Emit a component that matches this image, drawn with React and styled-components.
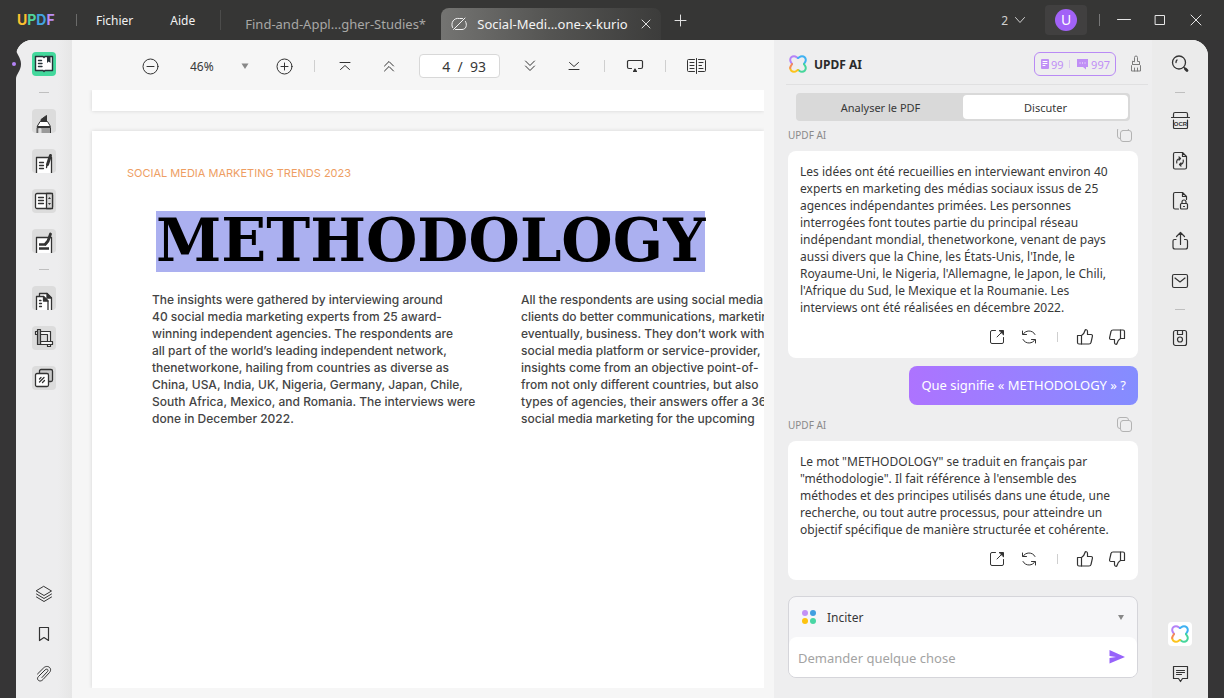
import React, { useState } from "react";
import styled, { createGlobalStyle, css } from "styled-components";

const GlobalStyle = createGlobalStyle`
    * { box-sizing: border-box; }
    body {
        margin: 0;
        background: #363536;
        font-family: "Noto Sans", "Open Sans", sans-serif;
        font-size: 12px;
        color: #383838;
    }
    button, input, select { font: inherit; color: inherit; }
`;

/* ---------- shared ---------- */

const Svg = styled.svg`
    display: block;
    flex: none;
    fill: none;
    stroke: currentColor;
    stroke-linecap: round;
    stroke-linejoin: round;
`;

const IconButton = styled.button`
    width: 24px;
    height: 24px;
    padding: 0;
    border: 0;
    border-radius: 4px;
    flex: none;
    overflow: hidden;
    cursor: pointer;
    color: ${props => props.$color || "#333"};
    background: ${props => props.$bg || "transparent"};
`;

const Divider = styled.span`
    width: 1px;
    height: ${props => props.$height || 12}px;
    flex: none;
    background: ${props => props.$color || "#cfcfcf"};
`;

const Icon = ({ children, width = 1 }) => (
    <Svg width="24" height="24" viewBox="0 0 24 24" strokeWidth={width} aria-hidden="true">
        {children}
    </Svg>
);

/* ---------- title bar ---------- */

const Page = styled.div`
    height: 100vh;
    display: flex;
    flex-direction: column;
    overflow: hidden;
`;

const TitleBar = styled.header`
    height: 40px;
    flex: none;
    display: flex;
    align-items: center;
    padding: 0 16px;
    background: #363635;
    color: #f2f2f2;
`;

const Logo = styled.div`
    width: 60px;
    padding-left: 1px;
    font-family: Inter, sans-serif;
    font-weight: 700;
    font-size: 14px;
    line-height: 20px;
`;

const Letter = styled.span`
    color: ${props => props.$color};
`;

const Menu = styled.nav`
    display: flex;
    gap: 37px;
    margin: 0 25px 0 19px;
`;

const MenuButton = styled.button`
    border: 0;
    padding: 2px 0 0;
    background: none;
    line-height: 20px;
    cursor: pointer;
`;

const Tabs = styled.div`
    align-self: flex-end;
    display: flex;
    flex: none;
    margin-right: 7px;
    font-size: 13px;
`;

const Tab = styled.div`
    width: 220px;
    height: 32px;
    display: flex;
    align-items: center;
    color: #a8a8a6;
    padding-left: 24px;
    ${props => props.$active && css`
        color: #f4f4f4;
        padding-left: 6px;
        border-radius: 8px 8px 0 0;
        background: linear-gradient(90deg, #747472, #545452 50%, #3c3c3b);
    `}
`;

const TabLabel = styled.button`
    border: 0;
    padding: 0;
    margin: 0 6px;
    background: none;
    white-space: nowrap;
    cursor: pointer;
    ${props => props.$bare && css`margin: 0;`}
`;

const WindowTools = styled.div`
    margin-left: auto;
    display: flex;
    align-items: center;
    gap: 12px;
`;

const WindowCount = styled.button`
    display: flex;
    align-items: center;
    border: 0;
    padding: 0;
    margin-right: 1px;
    background: none;
    color: #d0d0d0;
`;

const Account = styled.button`
    width: 42px;
    height: 30px;
    padding: 0;
    border: 0;
    border-radius: 4px;
    display: grid;
    place-items: center;
    background: #414040;
`;

const Avatar = styled.span`
    width: 22px;
    height: 22px;
    border-radius: 50%;
    background: #a262f7;
    color: #fff;
    font-size: 14px;
    line-height: 22px;
`;

/* ---------- shell ---------- */

const Shell = styled.div`
    position: relative;
    flex: 1;
    min-height: 0;
    display: flex;
    margin: 0 16px;
    border-radius: 16px 16px 0 0;
    background: #f6f6f6;
`;

const Rail = styled.aside`
    width: 56px;
    flex: none;
    display: flex;
    flex-direction: column;
    align-items: center;
    gap: 16px;
    padding: 12px 0;
    background: ${props => props.$right ? "#ebebeb" : "linear-gradient(90deg, #ededee 75%, #e6e6e6)"};
    border-radius: ${props => props.$right ? "0 16px 0 0" : "16px 0 0 0"};
`;

const RailDash = styled.span`
    width: 10px;
    height: 1px;
    flex: none;
    background: #bfbfbf;
`;

const Spacer = styled.span`
    flex: 1;
`;

const Notch = styled.svg`
    position: absolute;
    left: -4px;
    top: 9px;
`;

/* ---------- viewer ---------- */

const Viewer = styled.main`
    flex: 1;
    min-width: 0;
    display: flex;
    flex-direction: column;
    padding: 0 10px 10px 16px;
    background: #f6f6f6;
`;

const Toolbar = styled.div`
    height: 50px;
    flex: none;
    display: flex;
    align-items: center;
    gap: 18px;
    padding: 2px 0 0 50px;
`;

const StepGroup = styled.div`
    display: flex;
    gap: 20px;
`;

const ZoomSelect = styled.div`
    width: 74px;
    display: flex;
    align-items: center;
    padding: 0 4px 0 10px;
    select {
        flex: 1;
        appearance: none;
        border: 0;
        padding: 0;
        background: none;
    }
`;

const PageInput = styled.input`
    width: 81px;
    height: 24px;
    border: 1px solid #d8d8d8;
    border-radius: 4px;
    background: #fff;
    text-align: right;
    padding: 0 13px;
    font-size: 14px;
    white-space: pre;
`;

const Pages = styled.div`
    flex: 1;
    min-height: 0;
    overflow: hidden;
    display: flex;
    flex-direction: column;
    gap: 20px;
    padding-left: 4px;
`;

const Sheet = styled.article`
    background: #fff;
    box-shadow: 0 0 4px rgba(0, 0, 0, 0.14);
    font-family: Inter, sans-serif;
    overflow: hidden;
    ${props => props.$tail
        ? css`height: 21px; flex: none;`
        : css`flex: 1; padding: 34px 0 0 35px;`}
`;

const Kicker = styled.p`
    margin: 0;
    font-size: 11px;
    line-height: 17px;
    color: #ee9e63;
    text-transform: uppercase;
`;

const Title = styled.h1`
    margin: 29px 0 19px 29px;
    font-family: "DejaVu Serif", serif;
    font-size: 59px;
    font-weight: 700;
    line-height: 61px;
    color: #000;
    mark {
        display: block;
        width: fit-content;
        height: 61px;
        line-height: 60px;
        color: inherit;
        background: #abb0f0;
    }
`;

const Columns = styled.div`
    display: grid;
    grid-template-columns: 369px 369px;
    padding-left: 25px;
`;

const Column = styled.p`
    margin: 0;
    font-size: 12px;
    font-weight: 500;
    line-height: 17px;
    color: #444;
    white-space: pre;
`;

/* ---------- assistant ---------- */

const Panel = styled.section`
    width: 378px;
    flex: none;
    display: flex;
    flex-direction: column;
    padding: 0 14px 20px;
    background: #eeeeef;
`;

const PanelHeader = styled.div`
    height: 45px;
    flex: none;
    display: flex;
    align-items: center;
    margin: 0 -10px 0 -2px;
    padding: 4px 0 0;
    border-bottom: 1px solid #e0e0e1;
`;

const PanelTitle = styled.h2`
    flex: 1;
    margin: 0 0 0 4px;
    font-size: 12px;
    font-weight: 700;
    color: #2b2b2b;
`;

const Credits = styled.div`
    height: 24px;
    width: 82px;
    display: flex;
    align-items: center;
    justify-content: space-between;
    padding: 0 5px;
    margin-right: 8px;
    border: 1px solid #b98af5;
    border-radius: 6px;
    color: #c08ff6;
`;

const Credit = styled.span`
    display: flex;
    align-items: center;
    gap: 1px;
    font-size: 11px;
`;

const Switcher = styled.div`
    height: 28px;
    flex: none;
    display: grid;
    grid-template-columns: 1fr 1fr;
    margin: 8px 8px;
    padding: 2px;
    border-radius: 4px;
    background: #d9d9d9;
`;

const SwitchButton = styled.button`
    border: 0;
    padding: 0;
    border-radius: 4px;
    font-size: 11px;
    background: ${props => props.$on ? "#fff" : "transparent"};
    cursor: pointer;
`;

const Chat = styled.div`
    flex: 1;
    min-height: 0;
    overflow: hidden;
    display: flex;
    flex-direction: column;
    justify-content: flex-end;
    padding-bottom: 16px;
`;

const Sender = styled.div`
    height: 36px;
    flex: none;
    display: flex;
    align-items: center;
    justify-content: space-between;
    padding: 3px 1px 0 0;
    font-size: 10px;
    color: #8a8a8a;
`;

const Card = styled.div`
    flex: none;
    padding: 12px 12px 0;
    border-radius: 8px;
    background: #fff;
    p {
        margin: 0;
        line-height: 17px;
        white-space: pre;
    }
`;

const Actions = styled.div`
    height: 42px;
    display: flex;
    align-items: center;
    justify-content: flex-end;
    gap: 8px;
    margin-right: -3px;
`;

const ActionDivider = styled(Divider)`
    margin: 0 7px 0 8px;
`;

const Question = styled.p`
    align-self: flex-end;
    flex: none;
    margin: 8px 0 0;
    padding: 0 12px;
    line-height: 39px;
    border-radius: 8px;
    color: #fff;
    font-size: 13px;
    background: linear-gradient(90deg, #ad73ff, #848dff);
`;

const Composer = styled.form`
    height: 82px;
    flex: none;
    display: flex;
    flex-direction: column;
    border: 1px solid #d5d5da;
    border-radius: 8px;
    background: #f6f6f8;
    overflow: hidden;
`;

const PromptRow = styled.div`
    height: 40px;
    display: flex;
    align-items: center;
    padding: 0 4px 0 8px;
    select {
        flex: 1;
        appearance: none;
        border: 0;
        padding: 0 6px;
        background: none;
    }
`;

const AskRow = styled.div`
    flex: 1;
    display: flex;
    align-items: center;
    padding: 0 8px 0 9px;
    border-radius: 8px 8px 0 0;
    background: #fff;
    input {
        flex: 1;
        min-width: 0;
        border: 0;
        padding: 2px 0 0;
        outline: 0;
        font-size: 13px;
        background: none;
    }
    input::placeholder { color: #a3a3a3; opacity: 1; }
`;

/* ---------- icons ---------- */

const AiLogo = () => (
    <Icon width={2}>
        <path stroke="#b583f7" d="M6 12C6 11 4.200 10.200 4.200 8A3.800 3.800 0 0 1 8 4.200C10.400 4.200 10.800 6 12 6" />
        <path stroke="#3fb1f2" d="M12 6C13.200 6 13.600 4.200 16 4.200A3.800 3.800 0 0 1 19.800 8C19.800 10.200 18 11 18 12" />
        <path stroke="#46d69b" d="M18 12C18 13 19.800 13.800 19.800 16A3.800 3.800 0 0 1 16 19.800C13.600 19.800 13.200 18 12 18" />
        <path stroke="#fcc31c" d="M12 18C10.800 18 10.400 19.800 8 19.800A3.800 3.800 0 0 1 4.200 16" />
        <path stroke="#f58b57" d="M4.200 16C4.200 13.800 6 13 6 12" />
    </Icon>
);

const CaretIcon = () => (
    <Svg width="10" height="10" viewBox="0 0 10 10">
        <path fill="#888" stroke="none" d="M1.500 2.500H8.500L5 8Z" />
    </Svg>
);

const CopyIcon = () => (
    <Icon>
        <path d="M7.500 15.500H7A2.500 2.500 0 0 1 4.500 13V7A2.500 2.500 0 0 1 7 4.500H13A2.500 2.500 0 0 1 15.500 7V7.500" />
        <rect x="7.500" y="7.500" width="11" height="11" rx="2.500" />
    </Icon>
);

const ThumbPath = () => (
    <>
        <path d="M4.500 10.500H8.500V19H6A1.500 1.500 0 0 1 4.500 17.500Z" />
        <path d="M8.500 10.500C10.500 9.500 11.500 7.500 12 5.500C12.300 4.300 14.500 4.300 14.500 6.500V9.500H18C19.200 9.500 19.600 10.300 19.400 11.300L18 17.500C17.800 18.500 17 19 16 19H8.500" />
    </>
);

const icons = {
    reader: (
        <Icon width={1.4}>
            <path fill="#fff" stroke="#263238" d="M3.500 4.500H11L12 5.500L13 4.500H20.500V18.500H13L12 19.500L11 18.500H3.500Z" />
            <path stroke="#263238" d="M6.500 8.500H9.500M6.500 11.500H10M6.500 14.500H10" />
            <path fill="#263238" stroke="none" d="M15 4H18.500V11L16.700 9.500L15 11Z" />
        </Icon>
    ),
    highlight: (
        <Icon>
            <path fill="#333" d="M9 12V10.500L14.500 6.500V12Z" />
            <path fill="#fff" d="M8.500 12.500H15.500L18.500 17.500H5.500Z" />
            <path fill="#9a9a9a" d="M5.500 18.500H18.500V25H5.500Z" />
            <path stroke="#ddd" strokeWidth="3" d="M8 20.500V25" />
        </Icon>
    ),
    edit: (
        <Icon width={1.3}>
            <path fill="#fff" d="M4.500 25V8.500H19.500V25" />
            <path d="M7.500 13.500H11.500M7.500 16.500H11.500M7.500 19.500H11.500" />
            <path strokeWidth="3" d="M18.500 6.500L15.500 15.500" />
            <path d="M15 16L14.500 18.500" />
        </Icon>
    ),
    form: (
        <Icon width={1.3}>
            <rect x="3.500" y="4.500" width="17" height="15" rx="1.500" fill="#fff" />
            <path fill="#d5d5d5" d="M14.500 4.500H20.500V19.500H14.500Z" />
            <path d="M6.500 8.500H11.500M6.500 11.500H11.500M6.500 14.500H11.500" />
            <path fill="#333" stroke="none" d="M16 10H19L17.500 8ZM16 14H19L17.500 16Z" />
        </Icon>
    ),
    redact: (
        <Icon width={1.3}>
            <path fill="#fff" d="M4.500 25V8.500H19.500V25" />
            <path strokeWidth="2.500" strokeLinecap="butt" d="M7 15.500H14M7 19.500H17" />
            <path strokeWidth="2.800" d="M18.500 5L16 12L13.500 15" />
        </Icon>
    ),
    organize: (
        <Icon width={1.3}>
            <path fill="#fff" d="M7.500 7.500H15L19.500 12V25H7.500Z" />
            <path fill="#fff" d="M4.500 25V10.500H11.500L16 15V25" />
            <path fill="#333" d="M15 7.500V12H19.500ZM11.500 10.500V15H16Z" />
            <path d="M7.500 14.500H9M7.500 17.500H9.500M7.500 20.500H9.500" />
        </Icon>
    ),
    crop: (
        <Icon width={1.2}>
            <path fill="#f4f4f4" d="M3.500 5.500H18.500V20.500H15.500V8.500H3.500Z" />
            <path fill="#f4f4f4" d="M8.500 15.500H20.500V18.500H8.500Z" />
            <path fill="#aaa" d="M5.500 3.500H8.500V18.500H5.500Z" />
        </Icon>
    ),
    watermark: (
        <Icon width={1.3}>
            <rect x="7.500" y="3.500" width="13" height="12" rx="1.500" fill="#c9c9c9" />
            <rect x="3.500" y="7.500" width="13" height="13" rx="1.500" fill="#fff" />
            <path d="M7.500 13L9 11.500M7.500 16L12 11.500M10.500 16.500L12.500 14.500" />
        </Icon>
    ),
    layers: (
        <Icon>
            <path d="M12 4.500L19.500 9L12 13.500L4.500 9Z" />
            <path d="M4.500 12L12 16.500L19.500 12M4.500 15L12 19.500L19.500 15" />
        </Icon>
    ),
    bookmark: <Icon width={1.2}><path d="M7.500 5.500H16.500V18.500L12 15.500L7.500 18.500Z" /></Icon>,
    attach: (
        <Icon>
            <path d="M5.500 12L11.500 6C15.500 2 21 6.500 17.500 10.500L11 17.500C8 21 3.500 17.500 6.500 14.500L13 8C15 6 17 8 15.500 9.500L10 15.500" />
        </Icon>
    ),
    search: (
        <Icon width={1.3}>
            <circle cx="11" cy="10.500" r="6.500" />
            <path d="M8 10.500A3 3 0 0 1 9 8M16 15.500L17 16.500" />
            <path strokeWidth="2.800" d="M17.500 17L19 18.500" />
        </Icon>
    ),
    ocr: (
        <Icon width={1.2}>
            <path d="M5.500 8.500V5A1.500 1.500 0 0 1 7 3.500H18A1.500 1.500 0 0 1 19.500 5V8.500M3.500 8.500H21.500M5.500 11V18.500A1 1 0 0 0 6.500 19.500H18.500A1 1 0 0 0 19.500 18.500V11" />
            <text x="12.500" y="17" textAnchor="middle" fill="currentColor" stroke="none" fontFamily="Liberation Sans" fontSize="6" fontWeight="700">OCR</text>
        </Icon>
    ),
    convert: (
        <Icon width={1.2}>
            <path d="M14.500 3.500H7A1.500 1.500 0 0 0 5.500 5V18.500A1.500 1.500 0 0 0 7 20H17A1.500 1.500 0 0 0 18.500 18.500V7.500ZM14.500 3.500V7.500H18.500" />
            <path d="M8.800 14A3.500 3.500 0 0 1 12 9.500M11 8L12.500 9.500L11 11M15.200 11A3.500 3.500 0 0 1 12 15.500M13 14L11.500 15.500L13 17" />
        </Icon>
    ),
    protect: (
        <Icon width={1.2}>
            <path d="M10.500 20H7A1.500 1.500 0 0 1 5.500 18.500V5A1.500 1.500 0 0 1 7 3.500H14.500L18.500 7.500V10.500M14.500 3.500V7.500H18.500" />
            <rect x="12.500" y="14.500" width="7" height="5.500" rx="1" />
            <path d="M14 14.500V13A2 2 0 0 1 18 13V14.500M15.500 17.500H16.500" />
        </Icon>
    ),
    share: (
        <Icon width={1.2}>
            <path d="M8 10.500H6.500A1.500 1.500 0 0 0 5 12V18A2 2 0 0 0 7 20H17.500A2 2 0 0 0 19.500 18V12A1.500 1.500 0 0 0 18 10.500H16.500M12.500 15.500V4M8.500 7.500L12.500 3.500L16.500 7.500" />
        </Icon>
    ),
    mail: (
        <Icon width={1.2}>
            <rect x="4.500" y="5.500" width="15" height="13" rx="1.500" />
            <path d="M7 9L12 13L17 9" />
        </Icon>
    ),
    save: (
        <Icon width={1.2}>
            <rect x="5.500" y="4.500" width="13" height="15" rx="2" />
            <path d="M9.500 4.500V8.500H14.500V4.500" />
            <circle cx="12" cy="13.500" r="2.500" />
        </Icon>
    ),
    comment: (
        <Icon width={1.2}>
            <path d="M5.500 4.500H19.500V16.500H14.500L12.500 19.500L10.500 16.500H5.500ZM8.500 8.500H16.500M8.500 10.500H16.500M8.500 12.500H13.500" />
        </Icon>
    ),
    minus: <Icon><circle cx="12.500" cy="12.500" r="7.500" /><path d="M9 12.500H16" /></Icon>,
    plus: <Icon><circle cx="12.500" cy="12.500" r="7.500" /><path d="M9 12.500H16M12.500 9V16" /></Icon>,
    first: <Icon><path d="M7 8.500H17M7.500 15.500L12 11.500L16.500 15.500" /></Icon>,
    prev: <Icon><path d="M7.500 12L12 7.500L16.500 12M7.500 17L12 12.500L16.500 17" /></Icon>,
    next: <Icon><path d="M7.500 7L12 11.500L16.500 7M7.500 12L12 16.500L16.500 12" /></Icon>,
    last: <Icon><path d="M7 15.500H17M7.500 8.500L12 12.500L16.500 8.500" /></Icon>,
    present: (
        <Icon width={1.2}>
            <path d="M8.500 14.500H6A1.500 1.500 0 0 1 4.500 13V7.500A1.500 1.500 0 0 1 6 6.500H18.500A1.500 1.500 0 0 1 19.500 7.500V13A1.500 1.500 0 0 1 18 14.500H15.500" />
            <path fill="currentColor" d="M10.500 17.500L12 15L13.500 17.500Z" />
        </Icon>
    ),
    compare: (
        <Icon>
            <path d="M12.500 4.500V19.500M10.500 5.500H4.500A1 1 0 0 0 3.500 6.500V16.500A1 1 0 0 0 4.500 17.500H10.500M14.500 5.500H20.500A1 1 0 0 1 21.500 6.500V16.500A1 1 0 0 1 20.500 17.500H14.500M6 8.500H10M6 11.500H10M6 14.500H10M15 8.500H19M15 11.500H17.500M15 14.500H19" />
        </Icon>
    ),
    open: (
        <Icon>
            <path d="M10.500 5.500H7A1.500 1.500 0 0 0 5.500 7V17A1.500 1.500 0 0 0 7 18.500H17A1.500 1.500 0 0 0 18.500 17V12.500M12 12L17.500 6.500" />
            <path fill="currentColor" d="M14.500 5.500H18.500V9.500Z" />
        </Icon>
    ),
    refresh: (
        <Icon>
            <path d="M5.500 6V9.500H9.500M6 9.500C8 5 15.500 4.500 18 9.500M18.500 18V14.500H14.500M18 14.500C16 19 8.500 19.500 6 14.500" />
        </Icon>
    ),
    like: <Icon width={1.2}><ThumbPath /></Icon>,
    dislike: <Icon width={1.2}><g transform="rotate(180 12 12)"><ThumbPath /></g></Icon>,
    clean: (
        <Icon>
            <path d="M10.500 9.500V5.500A1.500 1.500 0 0 1 13.500 5.500V9.500H15.500V12.500H8.500V9.500ZM8.500 12.500L7.500 13.500V19H16.500V13.500L15.500 12.500M10.500 16V19M13.500 16V19" />
        </Icon>
    ),
    close: <Icon><path d="M8 8L16 16M16 8L8 16" /></Icon>,
    add: <Icon><path d="M7 12.500H18M12.500 7V18" /></Icon>,
};

/* ---------- content ---------- */

const columnOne = `The insights were gathered by interviewing around
40 social media marketing experts from 25 award-
winning independent agencies. The respondents are
all part of the world’s leading independent network,
thenetworkone, hailing from countries as diverse as
China, USA, India, UK, Nigeria, Germany, Japan, Chile,
South Africa, Mexico, and Romania. The interviews were
done in December 2022.`;

const columnTwo = `All the respondents are using social media
clients do better communications, marketing
eventually, business. They don’t work with
social media platform or service-provider,
insights come from an objective point-of-
from not only different countries, but also
types of agencies, their answers offer a 36
social media marketing for the upcoming`;

const answerOne = `Les idées ont été recueillies en interviewant environ 40
experts en marketing des médias sociaux issus de 25
agences indépendantes primées. Les personnes
interrogées font toutes partie du principal réseau
indépendant mondial, thenetworkone, venant de pays
aussi divers que la Chine, les États-Unis, l'Inde, le
Royaume-Uni, le Nigeria, l'Allemagne, le Japon, le Chili,
l'Afrique du Sud, le Mexique et la Roumanie. Les
interviews ont été réalisées en décembre 2022.`;

const answerTwo = `Le mot "METHODOLOGY" se traduit en français par
"méthodologie". Il fait référence à l'ensemble des
méthodes et des principes utilisés dans une étude, une
recherche, ou tout autre processus, pour atteindre un
objectif spécifique de manière structurée et cohérente.`;

const leftTools = ["highlight", "edit", "form", "redact", "-", "organize", "crop", "watermark"];
const rightTools = ["search", "-", "ocr", "convert", "protect", "share", "mail", "-", "save"];

const Tool = ({ name, bg, color }) => (
    <IconButton type="button" aria-label={name} $bg={bg} $color={color}>{icons[name]}</IconButton>
);

const ToolList = ({ names, bg }) => names.map((name, i) =>
    name === "-" ? <RailDash key={i} /> : <Tool key={name} name={name} bg={bg} />
);

const Answer = ({ text }) => (
    <>
        <Sender>
            <span>UPDF AI</span>
            <IconButton type="button" aria-label="Copier" $color="#b3b3b3"><CopyIcon /></IconButton>
        </Sender>
        <Card>
            <p>{text}</p>
            <Actions>
                <Tool name="open" />
                <Tool name="refresh" />
                <ActionDivider $height={10} />
                <Tool name="like" />
                <Tool name="dislike" />
            </Actions>
        </Card>
    </>
);

const App = () => {
    const [mode, setMode] = useState("chat");
    const [page, setPage] = useState("4  /  93");
    const [question, setQuestion] = useState("");

    return <Page>
        <GlobalStyle />
        <TitleBar>
            <Logo>
                <Letter $color="#fbc12f">U</Letter>
                <Letter $color="#50d49b">P</Letter>
                <Letter $color="#42a5e0">D</Letter>
                <Letter $color="#bd8df5">F</Letter>
            </Logo>
            <Divider $color="#6b6b6a" />
            <Menu>
                <MenuButton type="button">Fichier</MenuButton>
                <MenuButton type="button">Aide</MenuButton>
            </Menu>
            <Divider $height={20} $color="#4c4c4b" />
            <Tabs>
                <Tab>
                    <TabLabel type="button" $bare>Find-and-Appl...gher-Studies*</TabLabel>
                </Tab>
                <Tab $active>
                    <Svg width="24" height="24" viewBox="0 0 24 24" stroke="#b0b0ae">
                        <path d="M6.500 17.500L18 6M5.500 15.500C3.500 11 6.500 5.500 12.500 6.500L15.500 6.500M8.500 17.500H15C19 17.500 20.500 13 18.500 9.500" />
                    </Svg>
                    <TabLabel type="button">Social-Medi...one-x-kurio</TabLabel>
                    <Tool name="close" color="#e0e0e0" />
                </Tab>
            </Tabs>
            <Tool name="add" color="#e0e0e0" />
            <WindowTools>
                <WindowCount type="button">
                    2
                    <Icon><path d="M7.500 9.500L12 14.500L16.500 9.500" /></Icon>
                </WindowCount>
                <Account type="button" aria-label="Compte"><Avatar>U</Avatar></Account>
                <Divider $color="#777" />
                <IconButton type="button" aria-label="Réduire" $color="#e6e6e6">
                    <Icon><path d="M5.500 11.500H18.500" /></Icon>
                </IconButton>
                <IconButton type="button" aria-label="Agrandir" $color="#e6e6e6">
                    <Icon><rect x="7.500" y="7.500" width="9" height="9" /></Icon>
                </IconButton>
                <IconButton type="button" aria-label="Fermer" $color="#e6e6e6">
                    <Icon><path d="M7 7L17 17M17 7L7 17" /></Icon>
                </IconButton>
            </WindowTools>
        </TitleBar>

        <Shell>
            <Rail>
                <Tool name="reader" bg="#43d89c" />
                <RailDash />
                <ToolList names={leftTools} bg="#dcdcdc" />
                <Spacer />
                <ToolList names={["layers", "bookmark", "attach"]} />
            </Rail>
            <Notch width="11" height="30" viewBox="0 0 11 30" aria-hidden="true">
                <path fill="#363536" d="M4 0C4 5 9 8 9 15C9 22 4 25 4 30Z" />
                <circle cx="2" cy="15" r="2" fill="#b583f7" />
            </Notch>

            <Viewer>
                <Toolbar>
                    <Tool name="minus" />
                    <ZoomSelect>
                        <select aria-label="Zoom" defaultValue="46%">
                            <option>46%</option>
                        </select>
                        <CaretIcon />
                    </ZoomSelect>
                    <Tool name="plus" />
                    <Divider />
                    <StepGroup>
                        <Tool name="first" />
                        <Tool name="prev" />
                    </StepGroup>
                    <PageInput aria-label="Page" value={page} onChange={e => setPage(e.target.value)} />
                    <StepGroup>
                        <Tool name="next" />
                        <Tool name="last" />
                    </StepGroup>
                    <Divider />
                    <Tool name="present" />
                    <Divider />
                    <Tool name="compare" />
                </Toolbar>
                <Pages>
                    <Sheet $tail />
                    <Sheet>
                        <Kicker>Social media marketing trends 2023</Kicker>
                        <Title><mark>METHODOLOGY</mark></Title>
                        <Columns>
                            <Column>{columnOne}</Column>
                            <Column>{columnTwo}</Column>
                        </Columns>
                    </Sheet>
                </Pages>
            </Viewer>

            <Panel>
                <PanelHeader>
                    <AiLogo />
                    <PanelTitle>UPDF AI</PanelTitle>
                    <Credits>
                        <Credit>
                            <Svg width="10" height="12" viewBox="0 0 10 12">
                                <rect x="1" y="1" width="8" height="10" rx="1" fill="currentColor" stroke="none" />
                                <path stroke="#fff" d="M3 3.500H7M3 5.500H7M3 7.500H5" />
                            </Svg>
                            99
                        </Credit>
                        <Divider $height={8} $color="#dccdf0" />
                        <Credit>
                            <Svg width="14" height="12" viewBox="0 0 14 12">
                                <path fill="currentColor" stroke="none" d="M1 1H12V9H10V11.500L7 9H1Z" />
                                <path stroke="#fff" d="M4 5H4.100M6.500 5H6.600M9 5H9.100" />
                            </Svg>
                            997
                        </Credit>
                    </Credits>
                    <Tool name="clean" color="#7d7d7d" />
                </PanelHeader>
                <Switcher>
                    <SwitchButton type="button" $on={mode === "analyse"} onClick={() => setMode("analyse")}>Analyser le PDF</SwitchButton>
                    <SwitchButton type="button" $on={mode === "chat"} onClick={() => setMode("chat")}>Discuter</SwitchButton>
                </Switcher>
                <Chat>
                    <Answer text={answerOne} />
                    <Question>Que signifie « METHODOLOGY » ?</Question>
                    <Answer text={answerTwo} />
                </Chat>
                <Composer onSubmit={e => e.preventDefault()}>
                    <PromptRow>
                        <Svg width="24" height="24" viewBox="0 0 24 24">
                            <g stroke="none">
                                <circle cx="8" cy="8" r="3" fill="#c391f5" />
                                <circle cx="16" cy="8" r="3" fill="#409fe0" />
                                <circle cx="8" cy="16" r="3" fill="#fdc310" />
                                <circle cx="16" cy="16" r="3" fill="#49d6a4" />
                            </g>
                        </Svg>
                        <select aria-label="Type de demande" defaultValue="Inciter">
                            <option>Inciter</option>
                        </select>
                        <IconButton as="span"><Icon><path fill="#888" stroke="none" d="M9 10H15L12 15Z" /></Icon></IconButton>
                    </PromptRow>
                    <AskRow>
                        <input
                            aria-label="Question"
                            placeholder="Demander quelque chose"
                            value={question}
                            onChange={e => setQuestion(e.target.value)}
                        />
                        <IconButton type="submit" aria-label="Envoyer">
                            <Icon>
                                <path fill="#9763fa" stroke="none" d="M4.500 5L20 12L4.500 18.500V13L11 12L4.500 11Z" />
                            </Icon>
                        </IconButton>
                    </AskRow>
                </Composer>
            </Panel>

            <Rail $right>
                <ToolList names={rightTools} />
                <Spacer />
                <IconButton type="button" aria-label="UPDF AI" $bg="#fff"><AiLogo /></IconButton>
                <Tool name="comment" />
            </Rail>
        </Shell>
    </Page>;
};

export default App;
